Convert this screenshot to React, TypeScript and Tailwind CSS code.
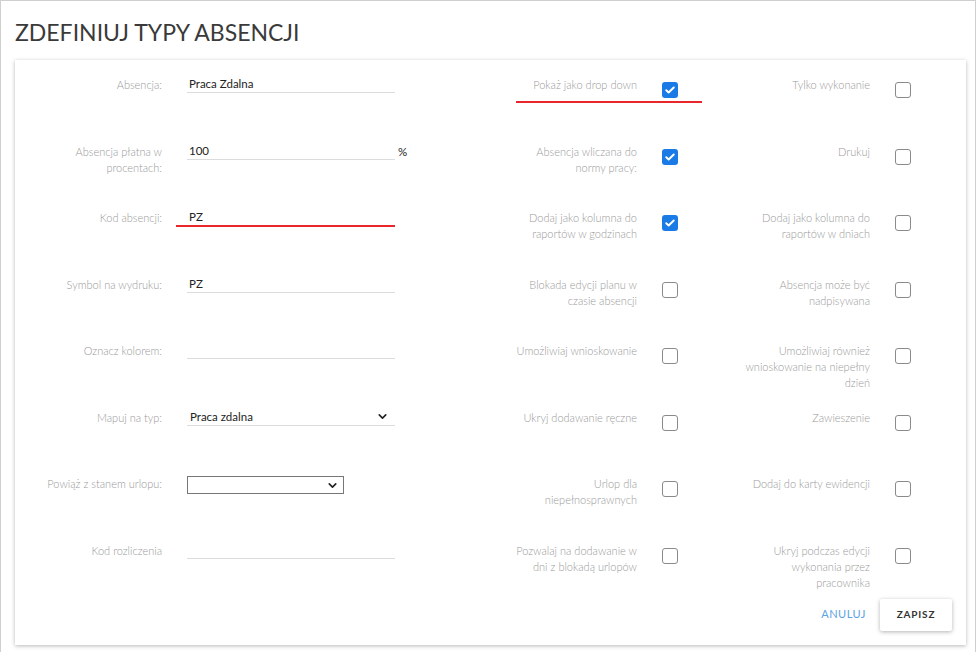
import { ChevronDown } from "lucide-react";

// ── Form atoms ────────────────────────────────────────────────────────────────

function Label({ children }: { children: React.ReactNode }) {
  return (
    <div className="w-[130px] shrink-0 text-right text-[11px] font-light leading-4 text-[#9a9a9a]">{children}</div>
  );
}

function TextField({ value, underline }: { value?: string; underline?: boolean }) {
  return (
    <div className="relative ml-[25px] w-[208px] shrink-0">
      <div className="h-[16px] border-b border-[#dcdcdc] px-[2px] text-[11.5px] leading-[14px] text-[#222]">
        {value}
      </div>
      {underline && <div className="absolute left-[-11px] right-0 top-[15px] h-[2px] bg-[#e8262b]" />}
    </div>
  );
}

function Check({ checked }: { checked?: boolean }) {
  return checked ? (
    <div className="ml-[25px] mt-[5px] flex h-[16px] w-[16px] shrink-0 items-center justify-center rounded-[3px] bg-[#1a7ae6]">
      <svg viewBox="0 0 16 16" className="h-[12px] w-[12px]">
        <path d="M3 8.3l3.2 3.1L13 4.6" fill="none" stroke="#fff" strokeWidth="2.6" strokeLinecap="round" strokeLinejoin="round" />
      </svg>
    </div>
  ) : (
    <div className="ml-[25px] mt-[5px] h-[16px] w-[16px] shrink-0 rounded-[3px] border border-[#8a8a8a] bg-white" />
  );
}

// ── Data ──────────────────────────────────────────────────────────────────────

type Row = {
  label: React.ReactNode;
  field: React.ReactNode;
  mid: string;
  midChecked?: boolean;
  right: string;
};

const rows: Row[] = [
  { label: "Absencja:", field: <TextField value="Praca Zdalna" />, mid: "Pokaż jako drop down", midChecked: true, right: "Tylko wykonanie" },
  { label: "Absencja płatna w procentach:", field: <TextField value="100" />, mid: "Absencja wliczana do normy pracy:", midChecked: true, right: "Drukuj" },
  { label: "Kod absencji:", field: <TextField value="PZ" underline />, mid: "Dodaj jako kolumna do raportów w godzinach", midChecked: true, right: "Dodaj jako kolumna do raportów w dniach" },
  { label: "Symbol na wydruku:", field: <TextField value="PZ" />, mid: "Blokada edycji planu w czasie absencji", right: "Absencja może być nadpisywana" },
  { label: "Oznacz kolorem:", field: <TextField />, mid: "Umożliwiaj wnioskowanie", right: "Umożliwiaj również wnioskowanie na niepełny dzień" },
  {
    label: "Mapuj na typ:",
    field: (
      <div className="ml-[25px] flex h-[16px] w-[208px] shrink-0 items-start justify-between border-b border-[#dcdcdc] pl-[3px] pr-[6px] text-[11.5px] leading-[14px] text-[#222]">
        <span>Praca zdalna</span>
        <ChevronDown size={13} strokeWidth={3} className="text-[#222]" />
      </div>
    ),
    mid: "Ukryj dodawanie ręczne",
    right: "Zawieszenie",
  },
  {
    label: "Powiąż z stanem urlopu:",
    field: (
      <div className="ml-[25px] mr-[51px] flex h-[18px] w-[157px] shrink-0 items-center justify-end border border-[#777] pr-[4px]">
        <ChevronDown size={13} strokeWidth={3} className="text-[#222]" />
      </div>
    ),
    mid: "Urlop dla niepełnosprawnych",
    right: "Dodaj do karty ewidencji",
  },
  { label: "Kod rozliczenia", field: <TextField />, mid: "Pozwalaj na dodawanie w dni z blokadą urlopów", right: "Ukryj podczas edycji wykonania przez pracownika" },
];

// ── Page ──────────────────────────────────────────────────────────────────────

export default function App() {
  return (
    <div
      className="h-[652px] w-[977px] overflow-hidden bg-white"
      style={{ fontFamily: "Lato, 'Open Sans', sans-serif" }}
    >
      <div className="h-[700px] w-[976px] border-l border-r border-t border-[#cfcfcf]">
        <h1 className="pl-[14px] pt-[16px] text-[23px] font-normal leading-[30px] text-[#3a3a3a]">
          ZDEFINIUJ TYPY ABSENCJI
        </h1>

        <div className="ml-[14px] mt-[13px] w-[951px] bg-white pb-[14px] pt-[17px] shadow-[0_1px_4px_rgba(0,0,0,0.28)]">
          {rows.map((r, i) => (
            <div key={i} className={`flex items-start pl-[17px] ${i === rows.length - 1 ? "" : "h-[66.5px]"}`}>
              <Label>{r.label}</Label>
              {r.field}
              {i === 1 ? (
                <span className="ml-[3px] w-[109px] shrink-0 text-[11.5px] leading-4 text-[#222]">%</span>
              ) : (
                <span className="w-[112px] shrink-0" />
              )}
              <div className="relative flex items-start">
                <Label>{r.mid}</Label>
                <Check checked={r.midChecked} />
                {i === 0 && <div className="absolute left-[9px] right-[-24px] top-[24px] h-[2px] bg-[#e8262b]" />}
              </div>
              <div className="ml-[62px] flex items-start">
                <Label>{r.right}</Label>
                <Check />
              </div>
            </div>
          ))}

          <div className="mt-[8px] flex items-center justify-end gap-[14px] pr-[14px]">
            <button type="button" className="text-[11px] tracking-[0.5px] text-[#5aa3e6]">
              ANULUJ
            </button>
            <button
              type="button"
              className="h-[32px] w-[72px] rounded-[2px] bg-white text-[10px] font-bold tracking-[0.8px] text-[#333] shadow-[0_1px_4px_rgba(0,0,0,0.3)]"
            >
              ZAPISZ
            </button>
          </div>
        </div>
      </div>
    </div>
  );
}
